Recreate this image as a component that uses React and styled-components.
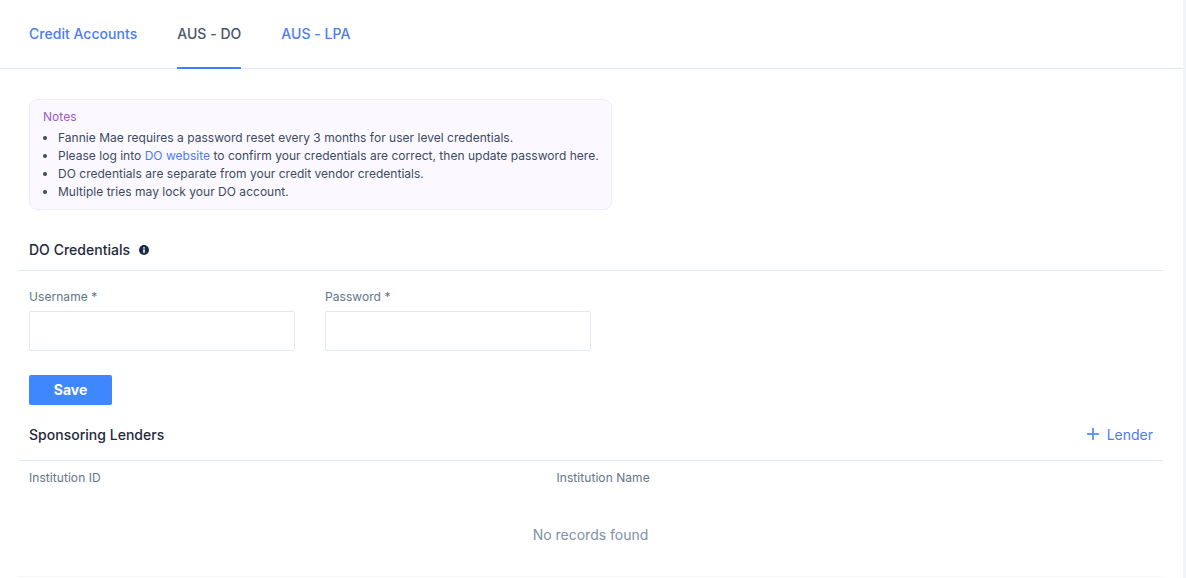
import React from 'react';
import styled, { createGlobalStyle } from 'styled-components';
import { Plus } from 'lucide-react';

const GlobalStyle = createGlobalStyle`
  html, body {
    margin: 0;
    padding: 0;
    background: #fff;
    overflow: hidden;
  }
  * {
    box-sizing: border-box;
  }
`;

const Page = styled.div`
  width: 1186px;
  height: 578px;
  display: flex;
  overflow: hidden;
  font-family: Inter, "Liberation Sans", sans-serif;
  color: #1e293b;
`;
const Main = styled.div`
  flex: 1;
  min-width: 0;
`;
const ScrollTrack = styled.div`
  width: 3px;
  background: #f1f5f9;
`;
const Tabs = styled.nav`
  height: 69px;
  display: flex;
  gap: 40px;
  padding-left: 29px;
  border-bottom: 1px solid #e2e8f0;
`;
const Tab = styled.a`
  height: 69px;
  display: flex;
  align-items: center;
  font-size: 14px;
  font-weight: 450;
  letter-spacing: 0.03px;
  color: ${(p) => (p.$active ? '#475569' : '#4b7bf5')};
  border-bottom: 2px solid ${(p) => (p.$active ? '#3b82f6' : 'transparent')};
`;
const Content = styled.div`
  padding: 30px 20px 0 18px;
`;
const NotesBox = styled.div`
  width: 583px;
  height: 111px;
  margin-left: 11px;
  padding: 9px 0 9px 13px;
  background: #fbf9ff;
  border: 1px solid #f0ecf8;
  border-radius: 8px;
`;
const NotesTitle = styled.div`
  font-size: 12px;
  line-height: 16px;
  letter-spacing: 0.03px;
  color: #9b59c9;
  margin-bottom: 4px;
`;
const NotesList = styled.ul`
  margin: 0;
  padding-left: 15px;
  font-size: 12px;
  line-height: 18px;
  letter-spacing: 0.02px;
  color: #3b4a60;
`;
const Link = styled.a`
  color: #4b7bf5;
`;
const SectionHead = styled.div`
  display: flex;
  align-items: center;
  justify-content: space-between;
  padding: 3px 10px 0 11px;
  height: ${(p) => p.$height}px;
  border-bottom: 1px solid #e2e8f0;
`;
const SectionTitle = styled.h3`
  margin: 0;
  display: flex;
  align-items: center;
  gap: 9px;
  font-size: 14px;
  font-weight: 450;
  letter-spacing: 0.02px;
  color: #1e293b;
`;
const InfoIcon = styled.svg`
  width: 10px;
  height: 10px;
  margin-top: 1px;
`;
const CredentialsHead = styled(SectionHead)`
  align-items: flex-start;
  padding-top: 31px;
`;
const Fields = styled.div`
  display: flex;
  gap: 30px;
  padding: 19px 0 0 11px;
`;
const Field = styled.label`
  display: flex;
  flex-direction: column;
  width: 266px;
  gap: 7px;
  font-size: 12px;
  line-height: 14px;
  letter-spacing: 0.06px;
  color: #64748b;
`;
const Input = styled.input`
  height: 40px;
  border: 1px solid #e2e8f0;
  border-radius: 2px;
  background: #fff;
`;
const SaveButton = styled.button`
  display: block;
  width: 83px;
  height: 30px;
  margin: 24px 0 0 11px;
  padding: 0 0 2px;
  border: none;
  border-radius: 2px;
  background: #3f87ff;
  color: #fff;
  font-family: inherit;
  font-size: 14px;
  font-weight: 700;
`;
const AddLink = styled.a`
  display: flex;
  align-items: center;
  gap: 5px;
  font-size: 14px;
  color: #4b7bf5;
  svg {
    color: #5e96fb;
  }
`;
const Table = styled.div`
  display: grid;
  grid-template-columns: 527.5px 1fr;
  grid-template-rows: 24px 1fr;
  padding-left: 11px;
  height: 116px;
  border-bottom: 1px solid #f1f5f9;
`;
const HeadCell = styled.div`
  padding-top: 10px;
  font-size: 12px;
  line-height: 14px;
  letter-spacing: 0.06px;
  color: #64748b;
`;
const Empty = styled.div`
  grid-column: 1 / -1;
  width: 1145px;
  margin-left: -11px;
  padding-top: 41px;
  text-align: center;
  font-size: 14px;
  color: #8090a6;
`;

export default function App() {
  return (
    <Page>
      <GlobalStyle />
      <Main>
        <Tabs>
          <Tab>Credit Accounts</Tab>
          <Tab $active>AUS - DO</Tab>
          <Tab>AUS - LPA</Tab>
        </Tabs>
        <Content>
          <NotesBox>
            <NotesTitle>Notes</NotesTitle>
            <NotesList>
              <li>Fannie Mae requires a password reset every 3 months for user level credentials.</li>
              <li>Please log into <Link>DO website</Link> to confirm your credentials are correct, then update password here.</li>
              <li>DO credentials are separate from your credit vendor credentials.</li>
              <li>Multiple tries may lock your DO account.</li>
            </NotesList>
          </NotesBox>
          <CredentialsHead $height={61}>
            <SectionTitle>
              DO Credentials
              <InfoIcon viewBox="0 0 10 10">
                <circle cx="5" cy="5" r="5" fill="#1b2a4a" />
                <rect x="4.2" y="4.4" width="1.6" height="3.4" fill="#fff" />
                <rect x="4.2" y="2.2" width="1.6" height="1.4" fill="#fff" />
              </InfoIcon>
            </SectionTitle>
          </CredentialsHead>
          <Fields>
            <Field>
              Username *
              <Input />
            </Field>
            <Field>
              Password *
              <Input type="password" />
            </Field>
          </Fields>
          <SaveButton>Save</SaveButton>
          <SectionHead $height={56}>
            <SectionTitle>Sponsoring Lenders</SectionTitle>
            <AddLink>
              <Plus size={18} strokeWidth={2.5} />
              Lender
            </AddLink>
          </SectionHead>
          <Table>
            <HeadCell>Institution ID</HeadCell>
            <HeadCell>Institution Name</HeadCell>
            <Empty>No records found</Empty>
          </Table>
        </Content>
      </Main>
      <ScrollTrack />
    </Page>
  );
}
